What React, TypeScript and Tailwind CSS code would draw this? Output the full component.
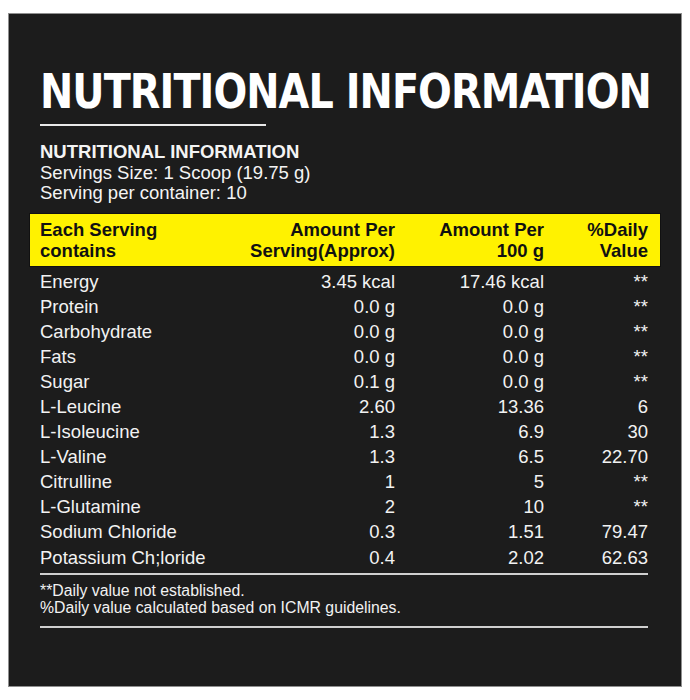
import React from "react";

const rows: [string, string, string, string][] = [
  ["Energy", "3.45 kcal", "17.46 kcal", "**"],
  ["Protein", "0.0 g", "0.0 g", "**"],
  ["Carbohydrate", "0.0 g", "0.0 g", "**"],
  ["Fats", "0.0 g", "0.0 g", "**"],
  ["Sugar", "0.1 g", "0.0 g", "**"],
  ["L-Leucine", "2.60", "13.36", "6"],
  ["L-Isoleucine", "1.3", "6.9", "30"],
  ["L-Valine", "1.3", "6.5", "22.70"],
  ["Citrulline", "1", "5", "**"],
  ["L-Glutamine", "2", "10", "**"],
  ["Sodium Chloride", "0.3", "1.51", "79.47"],
  ["Potassium Ch;loride", "0.4", "2.02", "62.63"],
];

export default function App() {
  return (
    <div className="bg-white w-[690px] h-[700px] pt-[13px] pl-[8px] font-['Liberation_Sans',Arial,sans-serif]">
      <div className="w-[674px] h-[674px] border border-[#8f8f8f] bg-[#1c1c1c] flex flex-col overflow-hidden">
        <div className="pl-[31px] pt-[53px]">
          <h1 className="font-['DejaVu_Sans_Condensed','Roboto',sans-serif] font-bold text-white text-[48px] leading-[49px] tracking-[-1px] whitespace-nowrap scale-x-[0.92] origin-left">
            NUTRITIONAL INFORMATION
          </h1>
          <div className="mt-[8px] w-[226px] h-[2px] bg-[#e8e8e8]" />
          <div className="mt-[16px] text-[18.5px] leading-[20.5px] text-[#f4f4f4]">
            <div className="font-bold">NUTRITIONAL INFORMATION</div>
            <div>Servings Size: 1 Scoop (19.75 g)</div>
            <div>Serving per container: 10</div>
          </div>
        </div>
        <div className="ml-[20px] mt-[9.5px] w-[632px]">
          <div className="bg-[#fff200] border border-[#111] h-[54px] pl-[10px] pr-[12px] grid grid-cols-[200px_155px_149px_104px] items-center text-[18.5px] leading-[21px] font-bold text-[#111]">
            <div>Each Serving<br />contains</div>
            <div className="text-right">Amount Per<br />Serving(Approx)</div>
            <div className="text-right">Amount Per<br />100 g</div>
            <div className="text-right">%Daily<br />Value</div>
          </div>
          <div className="pl-[11px] pr-[13px] pt-[1.5px] text-[18.5px] text-[#f2f2f2]">
            {rows.map((r) => (
              <div key={r[0]} className="grid grid-cols-[200px_155px_149px_104px] h-[25.1px] items-center leading-[21px]">
                <div className="whitespace-nowrap">{r[0]}</div>
                <div className="text-right">{r[1]}</div>
                <div className="text-right">{r[2]}</div>
                <div className="text-right">{r[3]}</div>
              </div>
            ))}
            <div className="mt-[3.5px] h-[2px] bg-[#cfcfcf]" />
            <div className="pt-[6.5px] pb-[10px] text-[15.8px] leading-[17px]">
              <div>**Daily value not established.</div>
              <div>%Daily value calculated based on ICMR guidelines.</div>
            </div>
            <div className="h-[2px] bg-[#cfcfcf]" />
          </div>
        </div>
      </div>
    </div>
  );
}
